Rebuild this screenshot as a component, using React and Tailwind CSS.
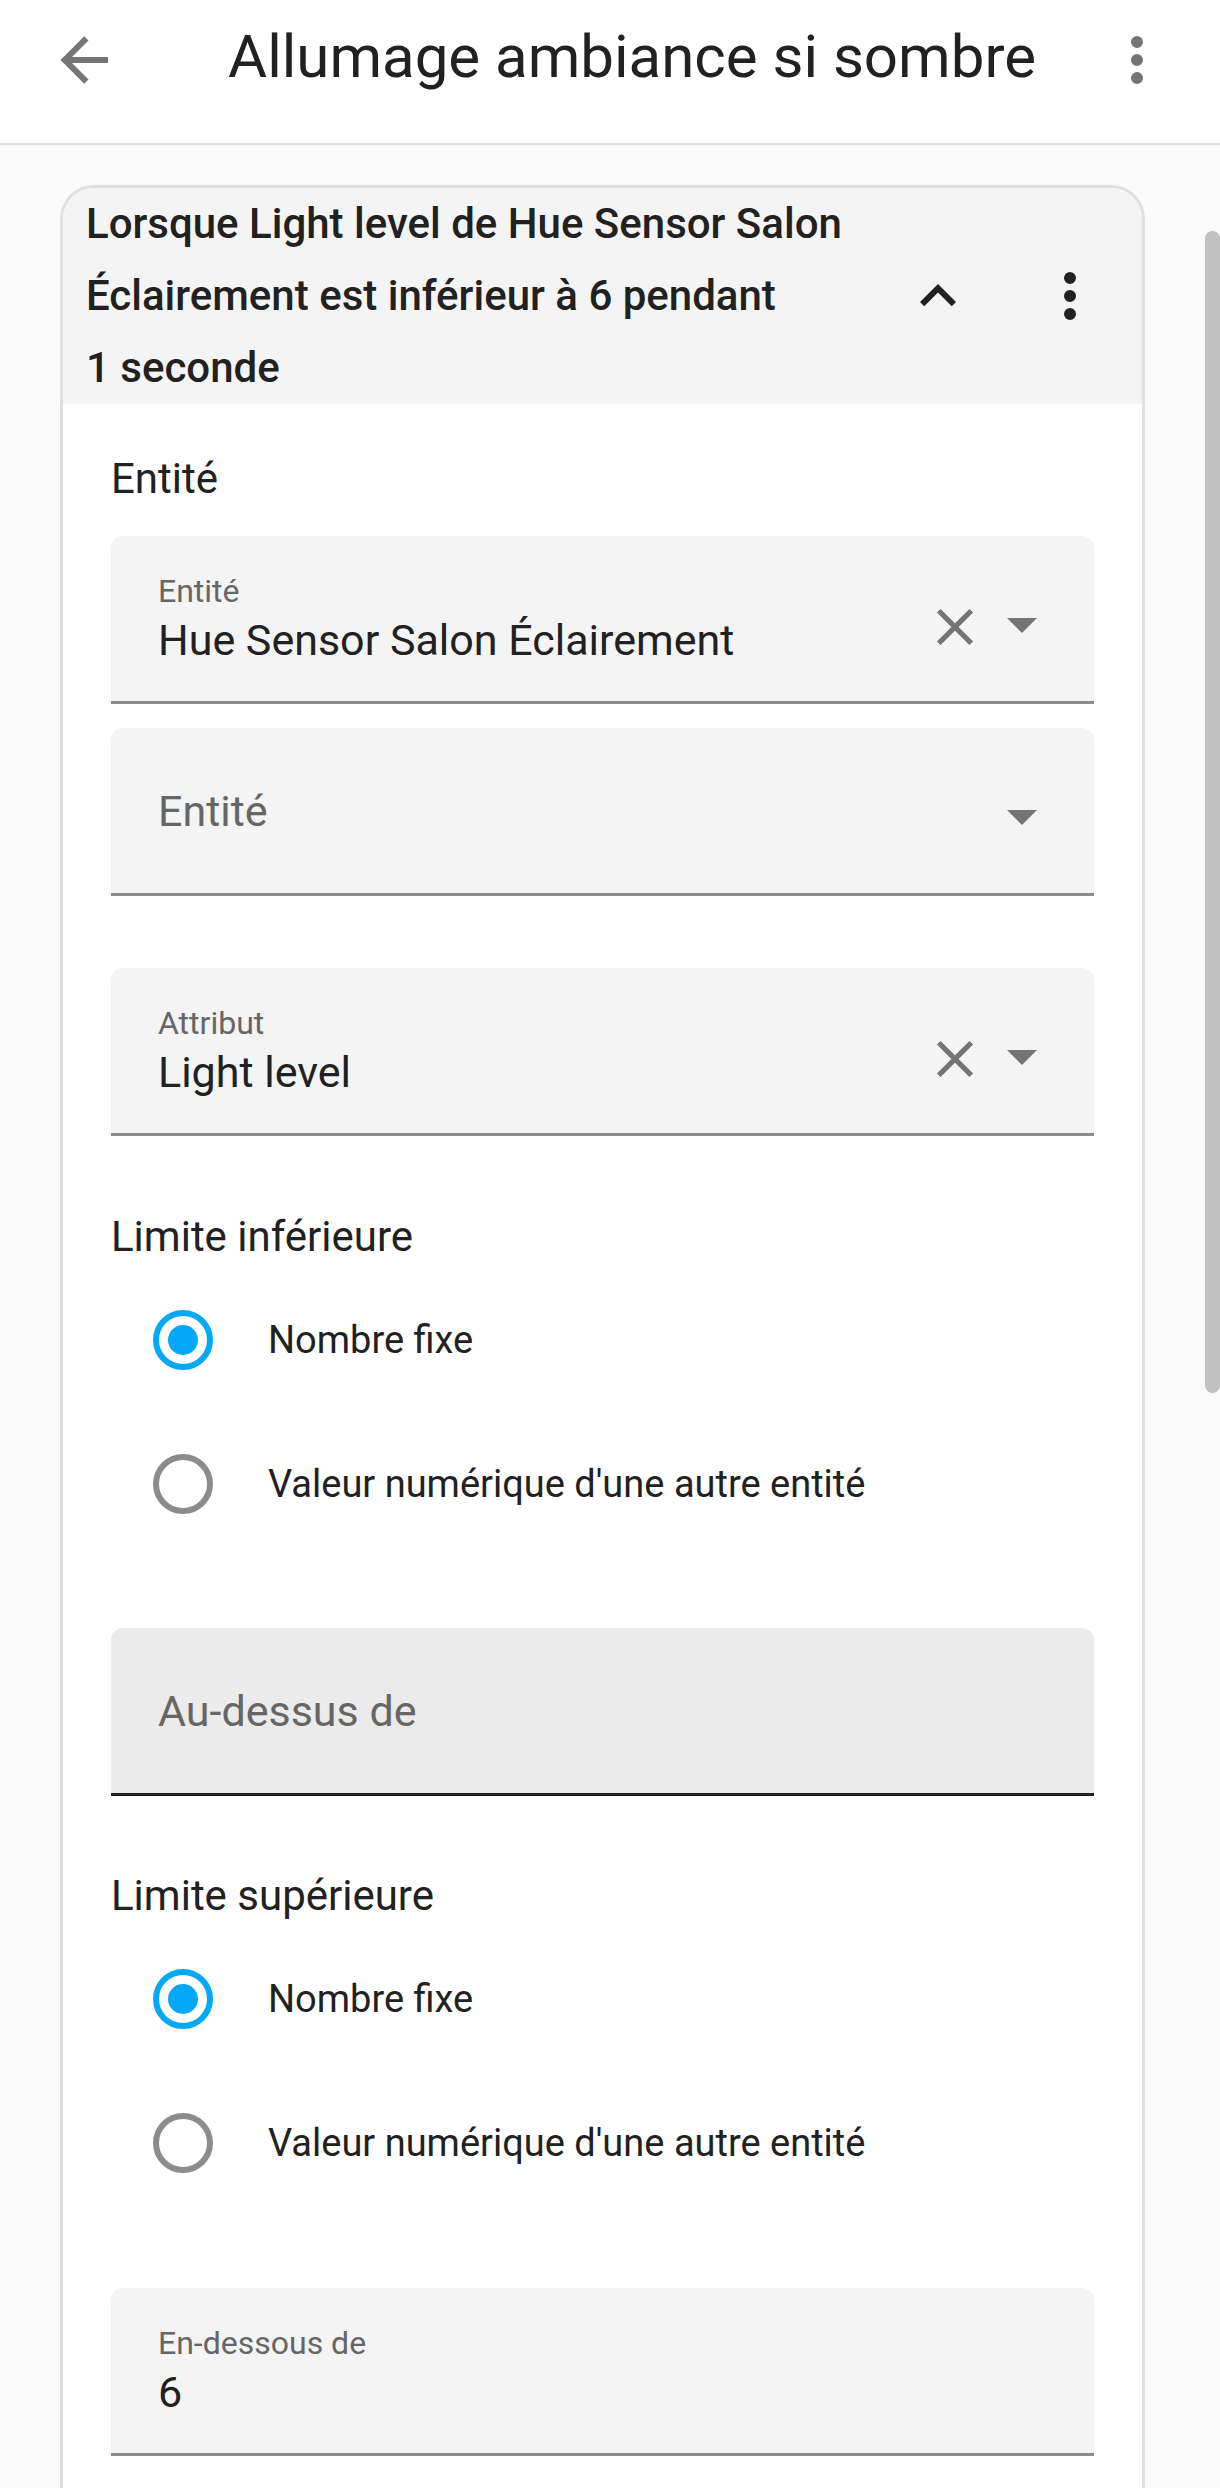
import React from 'react';

const ArrowLeft = ({ className }) => (
  <svg viewBox="0 0 24 24" className={className}>
    <path fill="currentColor" d="M20,11V13H8L13.5,18.5L12.08,19.92L4.16,12L12.08,4.08L13.5,5.5L8,11H20Z" />
  </svg>
);

const DotsVertical = ({ className }) => (
  <svg viewBox="0 0 24 24" className={className}>
    <path
      fill="currentColor"
      d="M12,16A2,2 0 0,1 14,18A2,2 0 0,1 12,20A2,2 0 0,1 10,18A2,2 0 0,1 12,16M12,10A2,2 0 0,1 14,12A2,2 0 0,1 12,14A2,2 0 0,1 10,12A2,2 0 0,1 12,10M12,4A2,2 0 0,1 14,6A2,2 0 0,1 12,8A2,2 0 0,1 10,6A2,2 0 0,1 12,4Z"
    />
  </svg>
);

const ChevronUp = ({ className }) => (
  <svg viewBox="0 0 24 24" className={className}>
    <path fill="currentColor" d="M7.41,15.41L12,10.83L16.59,15.41L18,14L12,8L6,14L7.41,15.41Z" />
  </svg>
);

const CloseIcon = ({ className }) => (
  <svg viewBox="0 0 24 24" className={className}>
    <path
      fill="currentColor"
      d="M19,6.41L17.59,5L12,10.59L6.41,5L5,6.41L10.59,12L5,17.59L6.41,19L12,13.41L17.59,19L19,17.59L13.41,12L19,6.41Z"
    />
  </svg>
);

const MenuDown = ({ className }) => (
  <svg viewBox="0 0 24 24" className={className}>
    <path fill="currentColor" d="M7,10L12,15L17,10H7Z" />
  </svg>
);

function Field({ label, value, placeholder, clearable, dropdown, active, className = '' }) {
  return (
    <div
      className={`flex h-[168px] rounded-t-[12px] border-b-[3px] ${
        active ? 'border-[#212121] bg-[#ebebeb]' : 'border-[#8c8c8c] bg-[#f4f4f4]'
      } ${className}`}
    >
      <div className="flex-1 pl-[47px]">
        {value != null ? (
          <>
            <div className="pt-[39px] text-[32px] leading-[32px] text-[#666666]">{label}</div>
            <div className="mt-[8px] text-[43px] leading-[50px] text-[#212121]">{value}</div>
          </>
        ) : (
          <div className="pt-[58px] text-[43px] leading-[50px] text-[#666666]">{placeholder}</div>
        )}
      </div>
      {clearable && <CloseIcon className="mt-[60px] h-[62px] w-[62px] text-[#757575]" />}
      {dropdown && <MenuDown className="mr-[36px] mt-[52px] h-[72px] w-[72px] text-[#757575]" />}
    </div>
  );
}

function Radio({ checked, label }) {
  return (
    <div className="flex h-[144px] items-center pl-[42px]">
      <div
        className={`flex h-[60px] w-[60px] items-center justify-center rounded-full border-[6px] ${
          checked ? 'border-[#03a9f4]' : 'border-[#8c8c8c]'
        }`}
      >
        {checked && <div className="h-[30px] w-[30px] rounded-full bg-[#03a9f4]" />}
      </div>
      <span className="ml-[55px] text-[38px] text-[#212121]">{label}</span>
    </div>
  );
}

export default function App() {
  return (
    <div className="h-[2488px] overflow-hidden bg-[#fafafa] font-['Roboto',sans-serif]">
      {/* Top bar */}
      <header className="flex h-[145px] items-start border-b-2 border-[#e0e0e0] bg-white">
        <ArrowLeft className="ml-[48px] mt-[24px] h-[72px] w-[72px] text-[#757575]" />
        <h1 className="ml-[108px] mt-[21px] flex-1 whitespace-nowrap text-[60px] leading-[72px] text-[#212121]">
          Allumage ambiance si sombre
        </h1>
        <DotsVertical className="mr-[47px] mt-[24px] h-[72px] w-[72px] text-[#757575]" />
      </header>

      <div className="flex">
        <main className="flex-1 px-[60px] pt-[40px]">
          <div className="overflow-hidden rounded-t-[34px] border-[3px] border-b-0 border-[#e0e0e0] bg-white">
            {/* Condition header */}
            <div className="flex items-center bg-[#f4f4f4]">
              <div className="flex-1 whitespace-nowrap pl-[23px] text-[42px] font-medium leading-[72px] text-[#212121]">
                <div>Lorsque Light level de Hue Sensor Salon</div>
                <div>Éclairement est inférieur à 6 pendant</div>
                <div>1 seconde</div>
              </div>
              <ChevronUp className="h-[72px] w-[72px] text-[#212121]" />
              <DotsVertical className="ml-[60px] mr-[36px] h-[72px] w-[72px] text-[#212121]" />
            </div>

            {/* Form */}
            <div className="px-[48px] pb-[120px] pt-[50px]">
              <div className="text-[42px] leading-[50px] text-[#212121]">Entité</div>
              <Field
                className="mt-[32px]"
                label="Entité"
                value="Hue Sensor Salon Éclairement"
                clearable
                dropdown
              />
              <Field className="mt-[24px]" placeholder="Entité" dropdown />
              <Field className="mt-[72px]" label="Attribut" value="Light level" clearable dropdown />

              <div className="mt-[76px] text-[42px] leading-[50px] text-[#212121]">Limite inférieure</div>
              <div className="mt-[6px]">
                <Radio checked label="Nombre fixe" />
                <Radio label="Valeur numérique d'une autre entité" />
              </div>
              <Field className="mt-[72px]" placeholder="Au-dessus de" active />

              <div className="mt-[75px] text-[42px] leading-[50px] text-[#212121]">Limite supérieure</div>
              <div className="mt-[6px]">
                <Radio checked label="Nombre fixe" />
                <Radio label="Valeur numérique d'une autre entité" />
              </div>
              <Field className="mt-[73px]" label="En-dessous de" value="6" />
            </div>
          </div>
        </main>

        {/* Scrollbar */}
        <div className="w-[15px]">
          <div className="mt-[86px] h-[1162px] rounded-full bg-[#c1c1c1]" />
        </div>
      </div>
    </div>
  );
}
